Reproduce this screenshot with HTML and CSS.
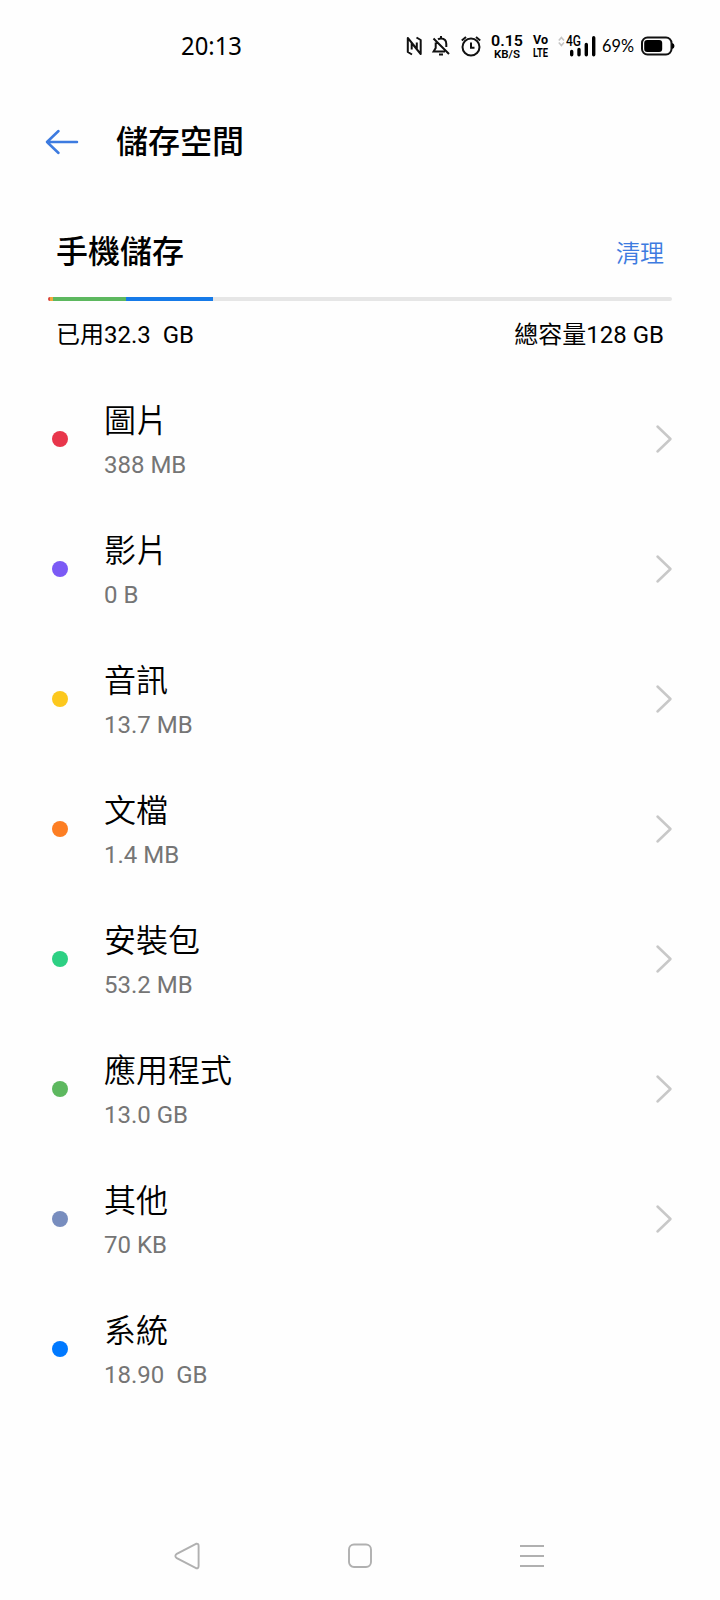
FILE: index.html
```html
<!DOCTYPE html>
<html lang="zh-Hant">
<head>
<meta charset="utf-8">
<title>儲存空間</title>
<link rel="stylesheet" href="styles.css">
</head>
<body>
<div class="screen">
  <div class="status">
    <svg class="clock" width="64" height="40" viewBox="0 0 64 40"><text x="1" y="28.500" textLength="61" lengthAdjust="spacingAndGlyphs">20:13</text></svg>
    <div class="indicators">
      <svg width="18" height="24" viewBox="0 0 18 24" fill="none" stroke="#111" stroke-width="2" stroke-linejoin="round"><path d="M7 20.500L2.800 18V4L11.800 14.800V8.500M11.500 3.500L15.700 6V20L6.700 9.200V15.500"/></svg>
      <svg class="bell" width="20" height="24" viewBox="0 0 20 24" fill="none" stroke="#111" stroke-width="2"><path d="M7 5.400Q8.300 4.500 10 4.500Q15.300 4.500 15.300 10V13M4.700 8.500V14L2.600 17.500H14M2.500 4.500L18 20M10 2V4.500M8 20.600H12"/></svg>
      <svg class="alarm" width="22" height="24" viewBox="0 0 22 24" fill="none" stroke="#111" stroke-width="2"><circle cx="11" cy="13" r="8.500"/><path d="M11 8.500V13.700H14.500M1.800 6.500L6 3M20.200 6.500L16 3"/></svg>
      <div class="speed"><svg width="34" height="14" viewBox="0 0 34 14"><text x="1" y="13" font-size="15.500" textLength="32" lengthAdjust="spacingAndGlyphs">0.15</text></svg><svg width="34" height="12" viewBox="0 0 34 12"><text x="4" y="10.600" font-size="11" textLength="26" lengthAdjust="spacingAndGlyphs">KB/S</text></svg></div>
      <div class="volte"><svg width="18" height="13" viewBox="0 0 18 13"><text x="1" y="11.300" textLength="15" lengthAdjust="spacingAndGlyphs">Vo</text></svg><svg width="18" height="13" viewBox="0 0 18 13"><text x="1" y="10.500" textLength="15" lengthAdjust="spacingAndGlyphs">LTE</text></svg></div>
      <svg class="signal" width="40" height="26" viewBox="0 0 40 26"><path d="M.8 7.500L3.400 4.500L6 7.500M.8 9.500L3.400 12.500L6 9.500" fill="none" stroke="#c4c4c4" stroke-width="1.600"/><text x="8" y="13" font-size="14" textLength="15" lengthAdjust="spacingAndGlyphs">4G</text><path d="M13.700 18.500V21.700M21 16.500V21.700M28.300 11.500V21.700M35.700 4.800V21.700" stroke="#000" stroke-width="3.400" stroke-linecap="round"/></svg>
      <svg class="percent" width="34" height="26" viewBox="0 0 34 26"><text x="1" y="18.800" textLength="32" lengthAdjust="spacingAndGlyphs">69%</text></svg>
      <svg class="battery" width="36" height="24" viewBox="0 0 36 24"><rect x="2" y="3.500" width="29.500" height="17" rx="5.500" fill="none" stroke="#111" stroke-width="2"/><rect x="4.200" y="6" width="18" height="12" rx="3"/><path d="M32 9Q34.500 9.500 34.500 12T32 15Z"/></svg>
    </div>
  </div>

  <header class="header">
    <svg class="back" width="34" height="28" viewBox="0 0 34 28" fill="none" stroke="#3d7be0" stroke-width="2.500" stroke-linecap="round" stroke-linejoin="round"><path d="M13.500 3L2 14L13.500 25M2 14H32"/></svg>
    <h1 class="heading">儲存空間</h1>
  </header>

  <section class="summary">
    <div class="summary-top">
      <h2 class="heading">手機儲存</h2>
      <a class="clean">清理</a>
    </div>
    <div class="meter">
      <i class="seg seg-image"></i><i class="seg seg-doc"></i><i class="seg seg-apps"></i><i class="seg seg-system"></i>
    </div>
    <div class="totals"><span class="used">已用32.3&nbsp; GB</span><span class="capacity">總容量128 GB</span></div>
  </section>

  <ul class="list">
    <li class="row"><i class="dot red"></i><div class="label"><b>圖片</b><span>388 MB</span></div><svg class="chevron" viewBox="0 0 18 30"><path d="M2.500 2.500L15.500 15L2.500 27.500"/></svg></li>
    <li class="row"><i class="dot violet"></i><div class="label"><b>影片</b><span>0 B</span></div><svg class="chevron" viewBox="0 0 18 30"><path d="M2.500 2.500L15.500 15L2.500 27.500"/></svg></li>
    <li class="row"><i class="dot yellow"></i><div class="label"><b>音訊</b><span>13.7 MB</span></div><svg class="chevron" viewBox="0 0 18 30"><path d="M2.500 2.500L15.500 15L2.500 27.500"/></svg></li>
    <li class="row"><i class="dot orange"></i><div class="label"><b>文檔</b><span>1.4 MB</span></div><svg class="chevron" viewBox="0 0 18 30"><path d="M2.500 2.500L15.500 15L2.500 27.500"/></svg></li>
    <li class="row"><i class="dot mint"></i><div class="label"><b>安裝包</b><span>53.2 MB</span></div><svg class="chevron" viewBox="0 0 18 30"><path d="M2.500 2.500L15.500 15L2.500 27.500"/></svg></li>
    <li class="row"><i class="dot green"></i><div class="label"><b>應用程式</b><span>13.0 GB</span></div><svg class="chevron" viewBox="0 0 18 30"><path d="M2.500 2.500L15.500 15L2.500 27.500"/></svg></li>
    <li class="row"><i class="dot slate"></i><div class="label"><b>其他</b><span>70 KB</span></div><svg class="chevron" viewBox="0 0 18 30"><path d="M2.500 2.500L15.500 15L2.500 27.500"/></svg></li>
    <li class="row"><i class="dot blue"></i><div class="label"><b>系統</b><span>18.90&nbsp; GB</span></div></li>
  </ul>

  <nav class="nav">
    <svg width="28" height="30" viewBox="0 0 28 30"><path d="M23 2.800L3.800 12.800Q.9 15 3.800 17.200L23 27.200Q25.600 27.800 25.600 25V5Q25.600 2.200 23 2.800Z"/></svg>
    <svg width="28" height="30" viewBox="0 0 28 30"><rect x="3" y="3.500" width="22" height="22.500" rx="5"/></svg>
    <svg width="28" height="30" viewBox="0 0 28 30"><path d="M2 5H26M2 15H26M2 25H26"/></svg>
  </nav>
</div>
</body>
</html>
```
FILE: styles.css
```css
* { box-sizing: border-box; }
body { margin: 0; background: #fefefe; }
.screen {
  width: 720px;
  height: 1600px;
  display: flex;
  flex-direction: column;
  color: #000;
  font-family: Roboto, "Noto Sans CJK TC", sans-serif;
}
.status {
  height: 92px;
  display: flex;
  align-items: center;
  justify-content: space-between;
  padding: 0 44px 0 180px;
}
.status svg { display: block; flex: none; overflow: visible; }
.clock text { font: 400 24.5px "Noto Sans", sans-serif; }
.indicators { display: flex; align-items: center; }
.indicators .bell { margin-left: 8px; }
.alarm { margin-left: 9px; }
.speed { margin-left: 8px; }
.volte { margin-left: 8px; }
.signal { margin-left: 8px; }
.percent { margin-left: 3px; }
.battery { margin-left: 5px; }
.speed text { font-family: Roboto, sans-serif; font-weight: 600; }
.volte text { font: 700 12.5px Roboto, sans-serif; }
.signal text { font-family: Roboto, sans-serif; font-weight: 500; }
.percent text { font: 400 17px Lato, sans-serif; }
.header {
  height: 100px;
  display: flex;
  align-items: center;
  padding-left: 45px;
}
.back { margin-right: 37px; }
.heading { margin: 0; font-size: 32px; line-height: 46px; font-weight: 500; }
.summary { height: 181px; padding: 36px 48px 0; }
.summary-top {
  height: 47px;
  display: flex;
  align-items: center;
  justify-content: space-between;
  padding: 0 8px;
}
.clean { color: #3d7be0; font-size: 24px; line-height: 36px; padding-top: 5px; font-weight: 350; }
.meter {
  height: 4px;
  margin-top: 22px;
  display: flex;
  overflow: hidden;
  border-radius: 2px;
  background: #e6e6e6;
}
.seg { height: 4px; }
.seg-image { width: 2px; background: #dc4638; }
.seg-doc { width: 3px; background: #f4a43c; }
.seg-apps { width: 73px; background: #5db85f; }
.seg-system { width: 87px; background: #167ae8; }
.totals {
  display: flex;
  justify-content: space-between;
  padding: 16px 8px 0;
  font-size: 24px;
  line-height: 36px;
}
.list { margin: 0; padding: 1px 0 0; list-style: none; }
.row {
  height: 130px;
  display: flex;
  align-items: center;
  padding: 0 47px 0 52px;
}
.dot { width: 16px; height: 16px; border-radius: 50%; margin-right: 36px; }
.label { flex: 1; display: flex; flex-direction: column; padding-top: 2px; }
.label b { font-weight: 350; font-size: 32px; line-height: 46px; }
.label span { font-size: 24px; line-height: 36px; margin-top: 3px; color: #757575; }
.chevron { width: 18px; height: 30px; fill: none; stroke: #c8c8c8; stroke-width: 2.5; stroke-linecap: round; stroke-linejoin: round; }
.red { background: #e8364b; }
.violet { background: #7b5af5; }
.yellow { background: #fcc81e; }
.orange { background: #fd7e23; }
.mint { background: #2dd083; }
.green { background: #5db85f; }
.slate { background: #788dbe; }
.blue { background: #0079ff; }
.nav {
  margin-top: auto;
  height: 88px;
  display: flex;
  justify-content: space-between;
  align-items: center;
  padding: 0 174px 0 173px;
}
.nav svg { fill: none; stroke: #b0b0b0; stroke-width: 1.9; }
```
